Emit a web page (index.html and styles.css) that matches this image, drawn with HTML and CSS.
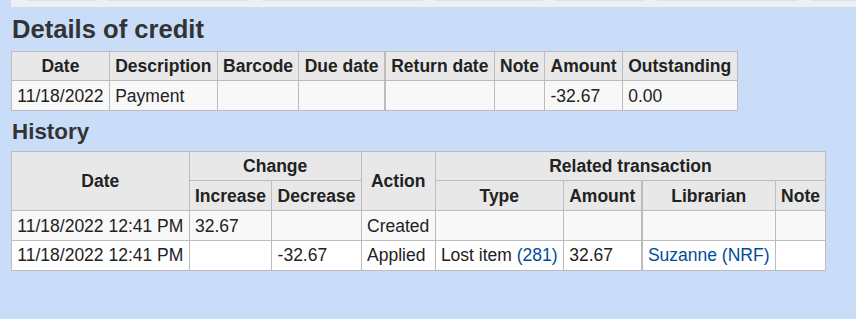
FILE: index.html
```html
<!DOCTYPE html>
<html lang="en">
<head>
<meta charset="utf-8">
<title>Details of credit</title>
<link rel="stylesheet" href="styles.css">
</head>
<body>
<div class="page">
  <div class="tabstrip">
    <span class="tab t1"></span>
    <span class="tab t2"></span>
    <span class="tab t3"></span>
    <span class="tab t4"></span>
    <span class="tab t5"></span>
    <span class="tab t6"></span>
    <span class="tab t7"></span>
  </div>
  <main class="content">
    <h1 class="title">Details of credit</h1>
    <table class="grid">
      <thead>
        <tr>
          <th>Date</th>
          <th>Description</th>
          <th>Barcode</th>
          <th>Due date</th>
          <th class="thick">Return date</th>
          <th>Note</th>
          <th>Amount</th>
          <th>Outstanding</th>
        </tr>
      </thead>
      <tbody>
        <tr class="odd">
          <td>11/18/2022</td>
          <td>Payment</td>
          <td></td>
          <td></td>
          <td class="thick"></td>
          <td></td>
          <td>-32.67</td>
          <td>0.00</td>
        </tr>
      </tbody>
    </table>

    <h2 class="subtitle">History</h2>
    <table class="grid">
      <thead>
        <tr>
          <th rowspan="2">Date</th>
          <th colspan="2">Change</th>
          <th rowspan="2">Action</th>
          <th colspan="4">Related transaction</th>
        </tr>
        <tr>
          <th>Increase</th>
          <th>Decrease</th>
          <th>Type</th>
          <th>Amount</th>
          <th class="thick">Librarian</th>
          <th>Note</th>
        </tr>
      </thead>
      <tbody>
        <tr class="odd">
          <td>11/18/2022 12:41 PM</td>
          <td>32.67</td>
          <td></td>
          <td>Created</td>
          <td></td>
          <td></td>
          <td class="thick"></td>
          <td></td>
        </tr>
        <tr class="even">
          <td>11/18/2022 12:41 PM</td>
          <td></td>
          <td>-32.67</td>
          <td>Applied</td>
          <td>Lost item <a href="#">(281)</a></td>
          <td>32.67</td>
          <td class="thick"><a href="#">Suzanne (NRF)</a></td>
          <td></td>
        </tr>
      </tbody>
    </table>
  </main>
</div>
</body>
</html>
```

FILE: styles.css
```css
html, body {
  margin: 0;
  padding: 0;
}

body {
  background: #c9ddf9;
  font-family: "Liberation Sans", Arial, sans-serif;
  font-size: 17.5px;
  color: #222;
}

.tabstrip {
  margin-left: 11px;
  height: 7px;
  background: #eaf1f4;
  display: flex;
  align-items: flex-start;
}

.tab {
  display: block;
  height: 1px;
  background: #d9e2e6;
  border-radius: 0 0 2px 2px;
}

.t1 { margin-left: 16px; width: 70px; }
.t2 { margin-left: 11px; width: 141px; }
.t3 { margin-left: 13px; width: 161px; }
.t4 { margin-left: 12px; width: 108px; }
.t5 { margin-left: 12px; width: 88px; }
.t6 { margin-left: 14px; width: 141px; }
.t7 { margin-left: 14px; width: 44px; }

.content {
  padding: 0 11px;
}

.title {
  margin: 8px 0 6.6px 1px;
  font-size: 25.6px;
  font-weight: bold;
  line-height: normal;
  color: #333;
}

.subtitle {
  margin: 7.4px 0 6px 1px;
  font-size: 22.4px;
  font-weight: bold;
  line-height: normal;
  color: #333;
}

.grid {
  border-collapse: collapse;
  border: 1px solid #bcbcbc;
}

.grid th,
.grid td {
  border: 1px solid #bcbcbc;
  padding: 4.4px 5.3px;
  line-height: 20px;
  white-space: nowrap;
}

.grid th {
  background: #e8e8e8;
  font-weight: bold;
  color: #222;
  text-align: center;
  vertical-align: middle;
}

.grid td {
  text-align: left;
  color: #222;
}

.grid tr.odd td {
  background: #f8f8f8;
}

.grid tr.even td {
  background: #ffffff;
}

.grid .thick {
  border-left: 2px solid #bcbcbc;
}

.grid a {
  color: #004d99;
  text-decoration: none;
}
```
